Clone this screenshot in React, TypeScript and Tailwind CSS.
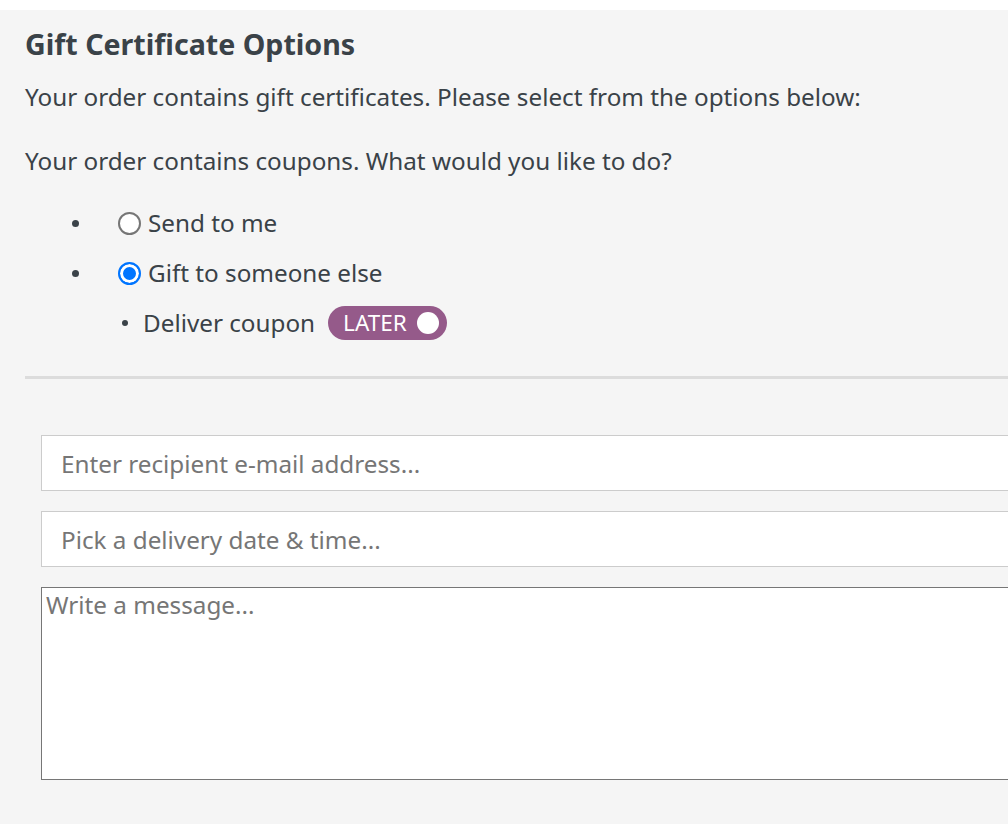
import React, { useState } from "react"

const font = { fontFamily: '"Noto Sans", "Open Sans", sans-serif' }

function Dot({ small }: { small?: boolean }) {
  return <span className={`inline-block rounded-full bg-[#3a4248] ${small ? "w-[6px] h-[6px]" : "w-[7px] h-[7px]"}`} />
}

export default function App() {
  const [choice, setChoice] = useState<"me" | "gift">("gift")

  return (
    <div className="w-full min-h-[824px] bg-white overflow-hidden" style={font}>
      <div className="mt-[10px] min-h-[814px] bg-[#f5f5f5] text-[#3a4248]">
        <div className="w-[1080px] pl-[25px] pt-[19px]">
          <h4 className="text-[28.6px] leading-[30px] font-bold">Gift Certificate Options</h4>

          <p className="mt-[21px] text-[24.25px] leading-[33px]">
            Your order contains gift certificates. Please select from the options below:
          </p>
          <p className="mt-[31px] text-[24.25px] leading-[33px]">Your order contains coupons. What would you like to do?</p>

          {/* Options */}
          <ul className="mt-[21px] text-[24.25px]">
            <li className="h-[50px] flex items-center">
              <span className="w-[100px] pl-[47px] flex items-center">
                <Dot />
              </span>
              <label className="flex items-center gap-[7px] -ml-[7px] cursor-pointer">
                <input
                  type="radio"
                  name="deliver"
                  checked={choice === "me"}
                  onChange={() => setChoice("me")}
                  className="appearance-none shrink-0 w-[23px] h-[23px] m-0 rounded-full border-2 border-[#767676] bg-white checked:border-[#0075ff] checked:bg-[#0075ff] checked:shadow-[inset_0_0_0_3px_#ffffff]"
                />
                <span>Send to me</span>
              </label>
            </li>
            <li className="h-[50px] flex items-center">
              <span className="w-[100px] pl-[47px] flex items-center">
                <Dot />
              </span>
              <label className="flex items-center gap-[7px] -ml-[7px] cursor-pointer">
                <input
                  type="radio"
                  name="deliver"
                  checked={choice === "gift"}
                  onChange={() => setChoice("gift")}
                  className="appearance-none shrink-0 w-[23px] h-[23px] m-0 rounded-full border-2 border-[#767676] bg-white checked:border-[#0075ff] checked:bg-[#0075ff] checked:shadow-[inset_0_0_0_3px_#ffffff]"
                />
                <span>Gift to someone else</span>
              </label>
            </li>
            <li className="h-[50px] flex items-center pl-[97px]">
              <Dot small />
              <span className="ml-[15px]">Deliver coupon</span>
              <button className="ml-[13px] h-[34px] flex items-center rounded-full bg-[#955a8a] pl-[15px] pr-[8px] text-white text-[22.5px]">
                <span>LATER</span>
                <span className="ml-[10px] w-[22px] h-[22px] rounded-full bg-white" />
              </button>
            </li>
          </ul>

          <hr className="mt-[28px] border-0 h-[3px] bg-[#dcdcdc]" />

          {/* Recipient form */}
          <div className="mt-[56px] ml-[16px] flex flex-col gap-[20px]">
            <input
              type="email"
              placeholder="Enter recipient e-mail address..."
              className="h-[56px] bg-white border border-[#cccccc] px-[19px] text-[24.25px] placeholder:text-[#767676] outline-none"
            />
            <input
              type="text"
              placeholder="Pick a delivery date & time..."
              className="h-[56px] bg-white border border-[#cccccc] px-[19px] text-[24.25px] placeholder:text-[#767676] outline-none"
            />
            <textarea
              placeholder="Write a message..."
              className="h-[193px] bg-white border border-[#767676] p-[2px] pl-[4px] text-[24.25px] leading-[30px] placeholder:text-[#767676] resize-none outline-none"
            />
          </div>
        </div>
      </div>
    </div>
  )
}
